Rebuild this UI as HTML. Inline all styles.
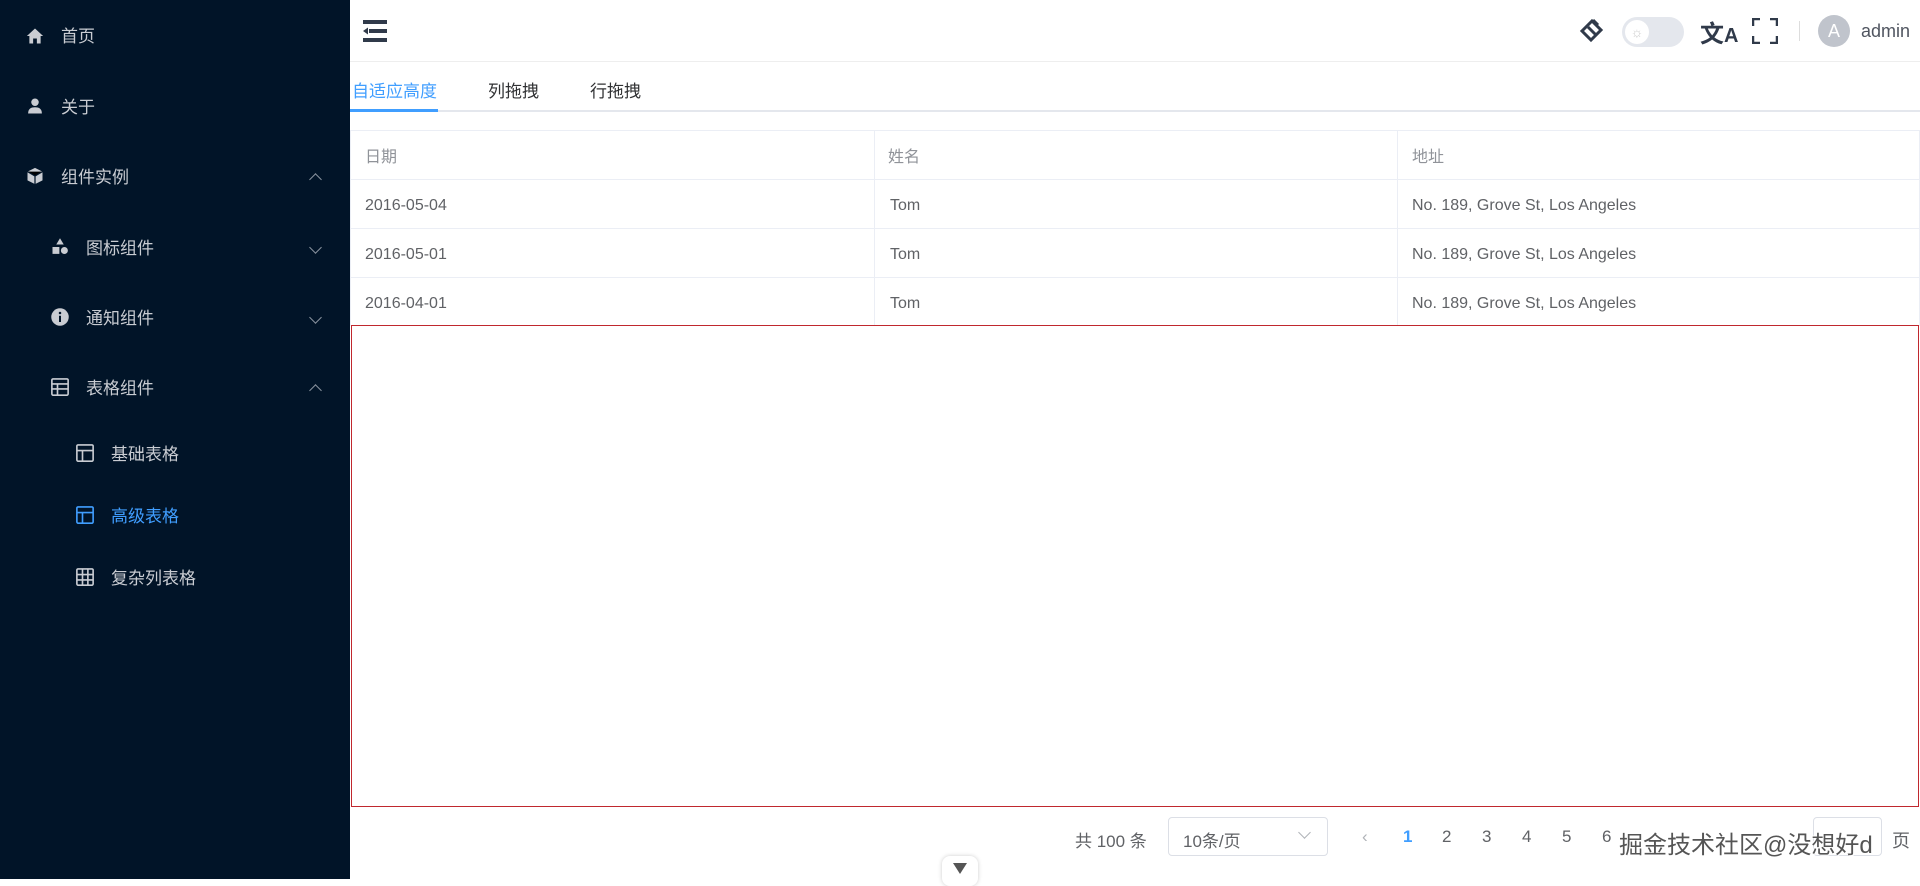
<!DOCTYPE html>
<html><head><meta charset="utf-8"><style>
*{margin:0;padding:0;box-sizing:border-box}
body{width:1920px;height:879px;overflow:hidden;font-family:"Liberation Sans","Noto Sans CJK SC",sans-serif;background:#fff;position:relative}
.sb{position:absolute;left:0;top:0;width:350px;height:879px;background:#011428}
.mi{position:absolute;font-size:17px;color:#c9ccd2;line-height:20px;margin-top:3px}
.ic{position:absolute;width:20px;height:20px;margin-top:1px}
.ar{position:absolute;left:311px;width:9px;height:9px;border-left:1.3px solid #8a939e;border-top:1.3px solid #8a939e;margin-top:3px}
.up{transform:rotate(45deg)}.dn{transform:rotate(225deg)}
.hd{position:absolute;left:350px;top:0;right:0;height:62px;border-bottom:1px solid #eee}
.tabs{position:absolute;left:350px;top:62px;right:0;height:50px;border-bottom:2px solid #e4e7ed}
.tab{position:absolute;top:15px;font-size:17px;color:#303133}
.tbl{position:absolute;left:351px;top:130px;width:1568px;border-top:1px solid #ebeef5}
.row{position:relative;height:49px;border-bottom:1px solid #ebeef5;font-size:16px;color:#606266}
.row div{position:absolute;top:17px}
.row.h div{top:12px}
.vl{position:absolute;top:130px;width:1px;height:196px;background:#ebeef5}
.pg{position:absolute;top:827px;font-size:17px;color:#606266}
</style></head><body>
<div class="sb">
 <svg class="ic" style="left:25px;top:25px" viewBox="0 0 16 16"><path d="M8 2L1.5 8H3.5V14H6.5V10H9.5V14H12.5V8H14.5Z" fill="#c9ccd2"/></svg>
 <div class="mi" style="left:61px;top:24px">首页</div>
 <svg class="ic" style="left:25px;top:95px" viewBox="0 0 16 16"><circle cx="8" cy="5" r="3" fill="#c9ccd2"/><path d="M2.5 14c0-4 2.5-5 5.5-5s5.5 1 5.5 5z" fill="#c9ccd2"/></svg>
 <div class="mi" style="left:61px;top:95px">关于</div>
 <svg class="ic" style="left:25px;top:165px" viewBox="0 0 16 16"><path d="M8 1.5L14 4.5V11.5L8 14.5L2 11.5V4.5Z" fill="#c9ccd2"/><path d="M2 4.5L8 8L14 4.5M8 8V14.5" stroke="#011428" stroke-width="1"/></svg>
 <div class="mi" style="left:61px;top:165px">组件实例</div><div class="ar up" style="top:172px"></div>
 <svg class="ic" style="left:50px;top:236px" viewBox="0 0 16 16"><path d="M8 1L11 6H5Z" fill="#c9ccd2"/><rect x="2" y="8" width="5.5" height="5.5" fill="#c9ccd2"/><circle cx="11.5" cy="10.8" r="2.8" fill="#c9ccd2"/></svg>
 <div class="mi" style="left:86px;top:236px">图标组件</div><div class="ar dn" style="top:240px"></div>
 <svg class="ic" style="left:50px;top:306px" viewBox="0 0 16 16"><circle cx="8" cy="8" r="7" fill="#c9ccd2"/><rect x="7.2" y="7" width="1.6" height="5" fill="#011428"/><circle cx="8" cy="4.8" r="1" fill="#011428"/></svg>
 <div class="mi" style="left:86px;top:306px">通知组件</div><div class="ar dn" style="top:310px"></div>
 <svg class="ic" style="left:50px;top:376px" viewBox="0 0 16 16" fill="none" stroke="#c9ccd2" stroke-width="1.3"><rect x="1.5" y="1.5" width="13" height="13" rx="1"/><path d="M1.5 5.5H14.5M1.5 9.5H14.5M6 5.5V14.5"/></svg>
 <div class="mi" style="left:86px;top:376px">表格组件</div><div class="ar up" style="top:383px"></div>
 <svg class="ic" style="left:75px;top:442px" viewBox="0 0 16 16" fill="none" stroke="#c9ccd2" stroke-width="1.3"><rect x="1.5" y="1.5" width="13" height="13" rx="1"/><path d="M1.5 6H14.5M6 6V14.5"/></svg>
 <div class="mi" style="left:111px;top:442px">基础表格</div>
 <svg class="ic" style="left:75px;top:504px" viewBox="0 0 16 16" fill="none" stroke="#409eff" stroke-width="1.3"><rect x="1.5" y="1.5" width="13" height="13" rx="1"/><path d="M1.5 6H14.5M6 6V14.5"/></svg>
 <div class="mi" style="left:111px;top:504px;color:#409eff">高级表格</div>
 <svg class="ic" style="left:75px;top:566px" viewBox="0 0 16 16" fill="none" stroke="#c9ccd2" stroke-width="1.3"><rect x="1.5" y="1.5" width="13" height="13" rx="1"/><path d="M1.5 6H14.5M1.5 10.3H14.5M6 1.5V14.5M10.3 1.5V14.5"/></svg>
 <div class="mi" style="left:111px;top:566px">复杂列表格</div>
</div>
<div class="hd">
 <svg style="position:absolute;left:13px;top:20px" width="24" height="22" viewBox="0 0 24 22"><rect x="0" y="0" width="24" height="4" fill="#303a4a"/><rect x="6" y="9" width="18" height="4" fill="#303a4a"/><rect x="0" y="18" width="24" height="4" fill="#303a4a"/><path d="M0 11L5 7.5V14.5Z" fill="#303a4a"/></svg>
 <svg style="position:absolute;left:1229px;top:18px" width="26" height="26" viewBox="0 0 26 26" fill="none" stroke="#303a4a" stroke-width="3"><path d="M13 3L22 12L12 22L3 13Z"/><path d="M9 9L17 17M14 2L19 7"/></svg>
 <div style="position:absolute;left:1272px;top:17px;width:62px;height:30px;border-radius:15px;background:#e4e7ed"><div style="position:absolute;left:3px;top:3px;width:24px;height:24px;border-radius:12px;background:#fff;color:#ccc;font-size:14px;text-align:center;line-height:24px">☼</div></div>
 <div style="position:absolute;left:1350px;top:14px;font-size:24px;color:#303a4a;font-weight:bold">文<span style="font-size:20px">A</span></div>
 <svg style="position:absolute;left:1402px;top:18px" width="26" height="26" viewBox="0 0 26 26" fill="none" stroke="#303a4a" stroke-width="2.5"><path d="M1 8V1H8M18 1H25V8M25 18V25H18M8 25H1V18"/></svg>
 <div style="position:absolute;left:1449px;top:21px;width:1px;height:20px;background:#ddd"></div>
 <div style="position:absolute;left:1468px;top:15px;width:32px;height:32px;border-radius:16px;background:#c0c4cc;color:#fff;font-size:18px;text-align:center;line-height:32px">A</div>
 <div style="position:absolute;left:1511px;top:21px;font-size:18px;color:#505560">admin</div>
</div>
<div class="tabs">
 <div class="tab" style="left:2px;color:#409eff">自适应高度</div>
 <div class="tab" style="left:138px">列拖拽</div>
 <div class="tab" style="left:240px">行拖拽</div>
 <div style="position:absolute;left:0;bottom:-2px;width:88px;height:3px;background:#409eff"></div>
</div>
<div class="tbl">
 <div class="row h" style="color:#909399"><div style="left:14px">日期</div><div style="left:537px">姓名</div><div style="left:1061px">地址</div></div>
 <div class="row"><div style="left:14px">2016-05-04</div><div style="left:539px">Tom</div><div style="left:1061px">No. 189, Grove St, Los Angeles</div></div>
 <div class="row"><div style="left:14px">2016-05-01</div><div style="left:539px">Tom</div><div style="left:1061px">No. 189, Grove St, Los Angeles</div></div>
 <div class="row" style="height:48px;border:none"><div style="left:14px">2016-04-01</div><div style="left:539px">Tom</div><div style="left:1061px">No. 189, Grove St, Los Angeles</div></div>
</div>
<div class="vl" style="left:350px"></div><div class="vl" style="left:874px"></div><div class="vl" style="left:1397px"></div><div class="vl" style="left:1919px"></div>
<div style="position:absolute;left:351px;top:325px;width:1568px;height:482px;border:1.5px solid #c0282e"></div>
<div class="pg" style="left:1075px">共 100 条</div>
<div style="position:absolute;left:1168px;top:817px;width:160px;height:39px;border:1px solid #dcdfe6;border-radius:4px"><span style="position:absolute;left:14px;top:9px;font-size:17px;color:#606266">10条/页</span><span style="position:absolute;right:18px;top:10px;width:9px;height:9px;border-right:1.3px solid #b0b3b8;border-bottom:1.3px solid #b0b3b8;transform:rotate(45deg)"></span></div>
<div class="pg" style="left:1362px;color:#b0b3b8">‹</div>
<div class="pg" style="left:1403px;color:#409eff;font-weight:bold">1</div>
<div class="pg" style="left:1442px">2</div><div class="pg" style="left:1482px">3</div><div class="pg" style="left:1522px">4</div><div class="pg" style="left:1562px">5</div><div class="pg" style="left:1602px">6</div>
<div style="position:absolute;left:1813px;top:817px;width:69px;height:39px;border:1px solid #dcdfe6;border-radius:4px"></div>
<div class="pg" style="left:1619px;top:825px;font-size:24px;color:#555;text-shadow:0 0 1px #fff,1px 1px 0 #fff,-1px -1px 0 #fff">掘金技术社区@没想好d</div>
<div class="pg" style="left:1892px;font-size:18px">页</div>
<div style="position:absolute;left:942px;top:856px;width:36px;height:30px;border-radius:8px;background:#fff;box-shadow:0 0 4px #ccc"><div style="position:absolute;left:11px;top:7px;border-left:7px solid transparent;border-right:7px solid transparent;border-top:11px solid #555"></div></div>
</body></html>
